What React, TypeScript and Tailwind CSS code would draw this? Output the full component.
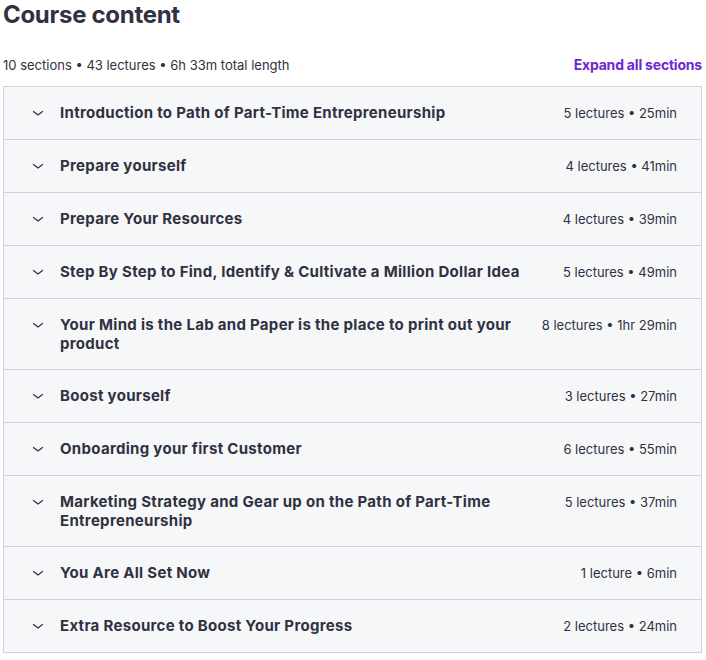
import React from 'react';

interface Section {
  title: string;
  meta: string;
}

const sections: Section[] = [
  { title: 'Introduction to Path of Part-Time Entrepreneurship', meta: '5 lectures • 25min' },
  { title: 'Prepare yourself', meta: '4 lectures • 41min' },
  { title: 'Prepare Your Resources', meta: '4 lectures • 39min' },
  { title: 'Step By Step to Find, Identify & Cultivate a Million Dollar Idea', meta: '5 lectures • 49min' },
  { title: 'Your Mind is the Lab and Paper is the place to print out your product', meta: '8 lectures • 1hr 29min' },
  { title: 'Boost yourself', meta: '3 lectures • 27min' },
  { title: 'Onboarding your first Customer', meta: '6 lectures • 55min' },
  { title: 'Marketing Strategy and Gear up on the Path of Part-Time Entrepreneurship', meta: '5 lectures • 37min' },
  { title: 'You Are All Set Now', meta: '1 lecture • 6min' },
  { title: 'Extra Resource to Boost Your Progress', meta: '2 lectures • 24min' },
];

const Chevron = () => (
  <svg width="16" height="16" viewBox="0 0 16 16" fill="none" className="shrink-0 mt-[2px]">
    <path d="M3.5 6.5l4.5 3.5 4.5-3.5" stroke="#303141" strokeWidth="1.2" strokeLinecap="round" strokeLinejoin="round" />
  </svg>
);

export default function App() {
  return (
    <div
      className="w-[706px] h-[660px] bg-white text-[#303141] pl-[3px] pr-[4px]"
      style={{ fontFamily: 'Inter, "Noto Sans", sans-serif' }}
    >
      <h2 className="text-[24px] leading-[30px] font-bold tracking-[-0.3px]">Course content</h2>
      <div className="flex items-end justify-between mt-[25px] mb-[11px]">
        <span className="text-[13px] leading-[20px]">10 sections • 43 lectures • 6h 33m total length</span>
        <button className="text-[14px] leading-[20px] font-bold text-[#6d28d2] tracking-[-0.2px]">Expand all sections</button>
      </div>
      <div className="border border-[#d1d2e0] bg-[#f6f7f9]">
        {sections.map((s, i) => (
          <div
            key={s.title}
            className={`flex items-start gap-[14px] pl-[26px] pr-[24px] py-[16px] ${i > 0 ? 'border-t border-[#d1d2e0]' : ''}`}
          >
            <Chevron />
            <div className="flex-1 pr-[8px] text-[15px] leading-[19px] font-bold tracking-[0.3px]">{s.title}</div>
            <div className="text-[13px] leading-[20px] whitespace-nowrap">{s.meta}</div>
          </div>
        ))}
      </div>
    </div>
  );
}
